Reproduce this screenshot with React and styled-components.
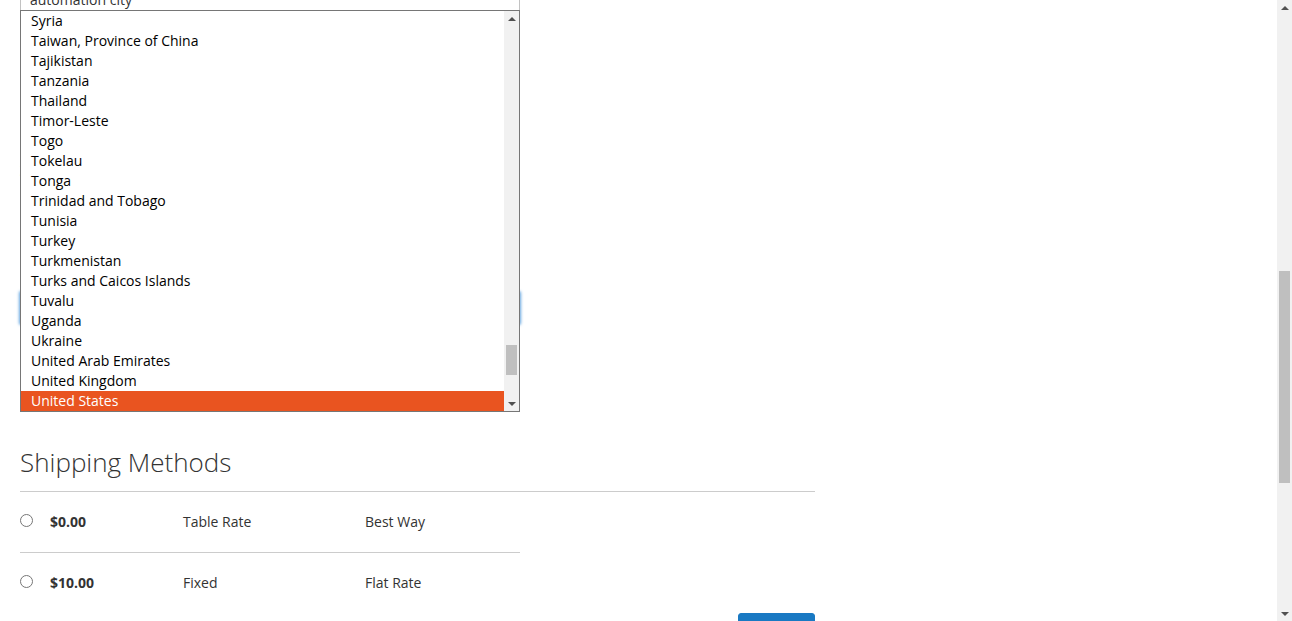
import { useLayoutEffect, useRef } from "react";
import styled, { createGlobalStyle } from "styled-components";

const COUNTRIES = [
  "Afghanistan", "Åland Islands", "Albania", "Algeria", "American Samoa", "Andorra", "Angola",
  "Anguilla", "Antarctica", "Antigua and Barbuda", "Argentina", "Armenia", "Aruba", "Australia",
  "Austria", "Azerbaijan", "Bahamas", "Bahrain", "Bangladesh", "Barbados", "Belarus", "Belgium",
  "Belize", "Benin", "Bermuda", "Bhutan", "Bolivia", "Bosnia and Herzegovina", "Botswana",
  "Bouvet Island", "Brazil", "British Indian Ocean Territory", "Brunei", "Bulgaria",
  "Burkina Faso", "Burundi", "Cambodia", "Cameroon", "Canada", "Cape Verde",
  "Caribbean Netherlands", "Cayman Islands", "Central African Republic", "Chad", "Chile", "China",
  "Christmas Island", "Cocos (Keeling) Islands", "Colombia", "Comoros", "Congo - Brazzaville",
  "Congo - Kinshasa", "Cook Islands", "Costa Rica", "Côte d’Ivoire", "Croatia", "Cuba", "Curaçao",
  "Cyprus", "Czech Republic", "Denmark", "Djibouti", "Dominica", "Dominican Republic", "Ecuador",
  "Egypt", "El Salvador", "Equatorial Guinea", "Eritrea", "Estonia", "Ethiopia",
  "Falkland Islands", "Faroe Islands", "Fiji", "Finland", "France", "French Guiana",
  "French Polynesia", "French Southern Territories", "Gabon", "Gambia", "Georgia", "Germany",
  "Ghana", "Gibraltar", "Greece", "Greenland", "Grenada", "Guadeloupe", "Guam", "Guatemala",
  "Guernsey", "Guinea", "Guinea-Bissau", "Guyana", "Haiti", "Heard and McDonald Islands",
  "Honduras", "Hong Kong SAR China", "Hungary", "Iceland", "India", "Indonesia", "Iran", "Iraq",
  "Ireland", "Isle of Man", "Israel", "Italy", "Jamaica", "Japan", "Jersey", "Jordan",
  "Kazakhstan", "Kenya", "Kiribati", "Kosovo", "Kuwait", "Kyrgyzstan", "Laos", "Latvia",
  "Lebanon", "Lesotho", "Liberia", "Libya", "Liechtenstein", "Lithuania", "Luxembourg",
  "Macau SAR China", "Macedonia", "Madagascar", "Malawi", "Malaysia", "Maldives", "Mali", "Malta",
  "Marshall Islands", "Martinique", "Mauritania", "Mauritius", "Mayotte", "Mexico", "Micronesia",
  "Moldova", "Monaco", "Mongolia", "Montenegro", "Montserrat", "Morocco", "Mozambique",
  "Myanmar (Burma)", "Namibia", "Nauru", "Nepal", "Netherlands", "New Caledonia", "New Zealand",
  "Nicaragua", "Niger", "Nigeria", "Niue", "Norfolk Island", "North Korea",
  "Northern Mariana Islands", "Norway", "Oman", "Pakistan", "Palau", "Palestinian Territories",
  "Panama", "Papua New Guinea", "Paraguay", "Peru", "Philippines", "Pitcairn Islands", "Poland",
  "Portugal", "Puerto Rico", "Qatar", "Réunion", "Romania", "Russia", "Rwanda", "Samoa",
  "San Marino", "São Tomé and Príncipe", "Saudi Arabia", "Senegal", "Serbia", "Seychelles",
  "Sierra Leone", "Singapore", "Sint Maarten", "Slovakia", "Slovenia", "Solomon Islands",
  "Somalia", "South Africa", "South Georgia and South Sandwich Islands", "South Korea",
  "South Sudan", "Spain", "Sri Lanka", "St. Barthélemy", "St. Helena", "St. Kitts and Nevis",
  "St. Lucia", "St. Martin", "St. Pierre and Miquelon", "St. Vincent and Grenadines", "Sudan",
  "Suriname", "Svalbard and Jan Mayen", "Swaziland", "Sweden", "Switzerland", "Syria",
  "Taiwan, Province of China", "Tajikistan", "Tanzania", "Thailand", "Timor-Leste", "Togo",
  "Tokelau", "Tonga", "Trinidad and Tobago", "Tunisia", "Turkey", "Turkmenistan",
  "Turks and Caicos Islands", "Tuvalu", "Uganda", "Ukraine", "United Arab Emirates",
  "United Kingdom", "United States", "United States Minor Outlying Islands", "Uruguay",
  "Uzbekistan", "Vanuatu", "Vatican City", "Venezuela", "Vietnam", "Virgin Islands, British",
  "Virgin Islands, U.S.", "Wallis and Futuna", "Western Sahara", "Yemen", "Zambia", "Zimbabwe",
];

const SELECTED = "United States";
const FIRST_VISIBLE = "Syria";
const OPTION_HEIGHT = 20;
const VISIBLE_ROWS = 20;
const ARROW = 15;

const methods = [
  { price: "$0.00", method: "Table Rate", carrier: "Best Way" },
  { price: "$10.00", method: "Fixed", carrier: "Flat Rate" },
];

// thumb geometry for a classic scrollbar
function thumbFor(trackLength, visible, total, offset) {
  const size = Math.max(18, Math.round((trackLength * visible) / total));
  const top = Math.round((offset / (total - visible)) * (trackLength - size));
  return { size, top };
}

function Scrollbar({ thumb, fixed }) {
  return (
    <Track $fixed={fixed}>
      <ArrowButton>
        <Triangle $up />
      </ArrowButton>
      <Rail>
        <Thumb style={{ top: thumb.top, height: thumb.size }} />
      </Rail>
      <ArrowButton>
        <Triangle />
      </ArrowButton>
    </Track>
  );
}

export default function App() {
  const cityRef = useRef(null);
  const listRef = useRef(null);
  const firstIndex = COUNTRIES.indexOf(FIRST_VISIBLE);

  useLayoutEffect(() => {
    // the list is open and scrolled down to Syria
    listRef.current.scrollTop = firstIndex * OPTION_HEIGHT;
    // page is scrolled so the city field sits just above the fold
    const top = cityRef.current.getBoundingClientRect().top + window.scrollY;
    window.scrollTo(0, top + 17);
  }, [firstIndex]);

  const listThumb = thumbFor(
    VISIBLE_ROWS * OPTION_HEIGHT - 2 * ARROW,
    VISIBLE_ROWS,
    COUNTRIES.length,
    firstIndex
  );

  return (
    <>
      <GlobalStyle />
      <Scrollbar fixed thumb={{ top: 256, size: 212 }} />
      <PageHeader>
        <Logo>Store</Logo>
      </PageHeader>
      <Progress>
        <Step $active>Shipping</Step>
        <Step>Review &amp; Payments</Step>
      </Progress>

      <Main>
        <Checkout>
          <AddressForm>
            <StepTitle>Shipping Address</StepTitle>
            <Field>
              <Label>Email Address</Label>
              <TextInput defaultValue="automation@example.com" />
            </Field>
            <Field>
              <Label>First Name</Label>
              <TextInput defaultValue="automation" />
            </Field>
            <Field>
              <Label>Last Name</Label>
              <TextInput defaultValue="user" />
            </Field>
            <Field>
              <Label>Street Address</Label>
              <TextInput defaultValue="automation street" />
              <ExtraLine />
              <ExtraLine />
            </Field>
            <Field>
              <Label>City</Label>
              <TextInput ref={cityRef} defaultValue="automation city" />
            </Field>
            <Field>
              <Label>State/Province</Label>
              <SelectBox defaultValue="tx">
                <option value="tx">Texas</option>
              </SelectBox>
            </Field>
            <Field>
              <Label>Zip/Postal Code</Label>
              <TextInput defaultValue="12345" />
            </Field>
            <Field>
              <Label>Country</Label>
              <SelectWrap>
                <SelectBox $focused defaultValue={SELECTED}>
                  <option value={SELECTED}>{SELECTED}</option>
                </SelectBox>
                <Popup role="listbox">
                  <OptionList ref={listRef}>
                    {COUNTRIES.map((c) => (
                      <Option key={c} $selected={c === SELECTED}>
                        {c}
                      </Option>
                    ))}
                  </OptionList>
                  <Scrollbar thumb={listThumb} />
                </Popup>
              </SelectWrap>
            </Field>
          </AddressForm>

          <ShippingStep>
            <StepTitle $tight>Shipping Methods</StepTitle>
            <MethodsTable>
              <tbody>
                {methods.map((m) => (
                  <tr key={m.price}>
                    <RadioCell>
                      <Radio type="radio" name="shipping" />
                    </RadioCell>
                    <PriceCell>{m.price}</PriceCell>
                    <MethodCell>{m.method}</MethodCell>
                    <td>{m.carrier}</td>
                  </tr>
                ))}
              </tbody>
            </MethodsTable>
            <Toolbar>
              <NextButton>Next</NextButton>
            </Toolbar>
          </ShippingStep>
        </Checkout>
      </Main>

      <Footer>
        <FooterLinks>
          <li>About us</li>
          <li>Customer Service</li>
          <li>Search Terms</li>
          <li>Privacy and Cookie Policy</li>
          <li>Advanced Search</li>
          <li>Orders and Returns</li>
        </FooterLinks>
        <Copyright>Copyright © 2013-present Magento, Inc. All rights reserved.</Copyright>
      </Footer>
    </>
  );
}

const GlobalStyle = createGlobalStyle`
  html, body {
    margin: 0;
    padding: 0;
  }
  body {
    font-family: "Open Sans", "Liberation Sans", sans-serif;
    font-size: 14px;
    line-height: 20px;
    color: #333;
    background: #fff;
  }
`;

const Track = styled.div`
  width: 15px;
  flex: none;
  display: flex;
  flex-direction: column;
  background: #f1f1f1;
  ${(p) =>
    p.$fixed
      ? `position: fixed; top: 0; right: 0; bottom: 0; z-index: 20;`
      : `height: 100%;`}
`;

const ArrowButton = styled.div`
  height: 15px;
  flex: none;
  display: flex;
  align-items: center;
  justify-content: center;
`;

const Triangle = styled.span`
  width: 0;
  height: 0;
  border-left: 4px solid transparent;
  border-right: 4px solid transparent;
  ${(p) =>
    p.$up ? "border-bottom: 4px solid #505050;" : "border-top: 4px solid #505050;"}
`;

const Rail = styled.div`
  flex: 1;
  position: relative;
`;

const Thumb = styled.div`
  position: absolute;
  left: 2px;
  right: 2px;
  background: #bfbfbf;
`;

const PageHeader = styled.header`
  height: 80px;
  box-sizing: border-box;
  padding: 20px;
  border-bottom: 1px solid #e8e8e8;
`;

const Logo = styled.div`
  font-size: 28px;
  line-height: 40px;
  font-weight: 700;
  color: #1979c3;
`;

const Progress = styled.ol`
  display: flex;
  gap: 40px;
  height: 50px;
  margin: 0;
  padding: 15px 20px 0;
  box-sizing: border-box;
  list-style: none;
`;

const Step = styled.li`
  font-weight: ${(p) => (p.$active ? 600 : 400)};
  color: ${(p) => (p.$active ? "#333" : "#999")};
`;

const Main = styled.main`
  padding: 0 20px;
`;

const Checkout = styled.div`
  width: 795px;
`;

const AddressForm = styled.section`
  display: flex;
  flex-direction: column;
`;

const StepTitle = styled.div`
  font-size: 26px;
  font-weight: 300;
  line-height: 29px;
  padding-bottom: ${(p) => (p.$tight ? "14px" : "10px")};
  margin-bottom: ${(p) => (p.$tight ? "0" : "28px")};
  border-bottom: 1px solid #ccc;
`;

const Field = styled.div`
  width: 500px;
  margin-bottom: 43px;
`;

const Label = styled.label`
  display: block;
  font-weight: 600;
  line-height: 20px;
  margin-bottom: 8px;
`;

const TextInput = styled.input`
  display: block;
  width: 100%;
  height: 32px;
  box-sizing: border-box;
  padding: 0 9px;
  border: 1px solid #c2c2c2;
  border-radius: 1px;
  font-family: "Open Sans", "Liberation Sans", sans-serif;
  font-size: 14px;
  line-height: 20px;
  color: #333;
  background: #fff;
  outline: none;
`;

const ExtraLine = styled(TextInput)`
  margin-top: 10px;
`;

const SelectWrap = styled.div`
  position: relative;
`;

const SelectBox = styled.select`
  display: block;
  width: 100%;
  height: 32px;
  box-sizing: border-box;
  padding: 0 9px;
  border: 1px solid #c2c2c2;
  border-radius: 1px;
  font-family: "Open Sans", "Liberation Sans", sans-serif;
  font-size: 14px;
  color: #333;
  background: #fff;
  outline: none;
  box-shadow: ${(p) => (p.$focused ? "0 0 3px 1px #68a8e0" : "none")};
`;

const Popup = styled.div`
  position: absolute;
  top: -282px;
  left: 0;
  width: 500px;
  height: 402px;
  box-sizing: border-box;
  border: 1px solid #767676;
  background: #fff;
  display: flex;
  z-index: 10;
`;

const OptionList = styled.div`
  flex: 1;
  min-width: 0;
  overflow: hidden;
`;

const Option = styled.div`
  height: 20px;
  line-height: 20px;
  padding: 0 10px;
  white-space: nowrap;
  font-size: 14px;
  color: ${(p) => (p.$selected ? "#fff" : "#000")};
  background: ${(p) => (p.$selected ? "#e95420" : "transparent")};
`;

const ShippingStep = styled.section`
  margin-top: 81px;
`;

const MethodsTable = styled.table`
  width: 500px;
  border-collapse: collapse;
  border-spacing: 0;

  td {
    padding: 20px 0;
    vertical-align: top;
    line-height: 20px;
    text-align: left;
  }
  tr + tr td {
    border-top: 1px solid #ccc;
  }
`;

const RadioCell = styled.td`
  width: 30px;
`;

const PriceCell = styled.td`
  width: 133px;
  font-weight: 700;
`;

const MethodCell = styled.td`
  width: 182px;
`;

const Radio = styled.input`
  display: block;
  width: 13px;
  height: 13px;
  margin: 2px 0 0 0;
`;

const Toolbar = styled.div`
  display: flex;
  justify-content: flex-end;
`;

const NextButton = styled.button`
  background: #1979c3;
  border: 1px solid #1979c3;
  border-radius: 3px;
  color: #fff;
  font-family: "Open Sans", "Liberation Sans", sans-serif;
  font-size: 18px;
  font-weight: 600;
  line-height: 22px;
  padding: 14px 16.5px;
  cursor: pointer;
`;

const Footer = styled.footer`
  margin-top: 40px;
  height: 606px;
  box-sizing: border-box;
  padding: 30px 20px;
  background: #f4f4f4;
  display: flex;
  flex-direction: column;
  justify-content: space-between;
`;

const FooterLinks = styled.ul`
  list-style: none;
  margin: 0;
  padding: 0;
  display: flex;
  flex-direction: column;
  gap: 6px;
`;

const Copyright = styled.small`
  display: block;
  text-align: center;
  font-size: 12px;
  color: #555;
`;
